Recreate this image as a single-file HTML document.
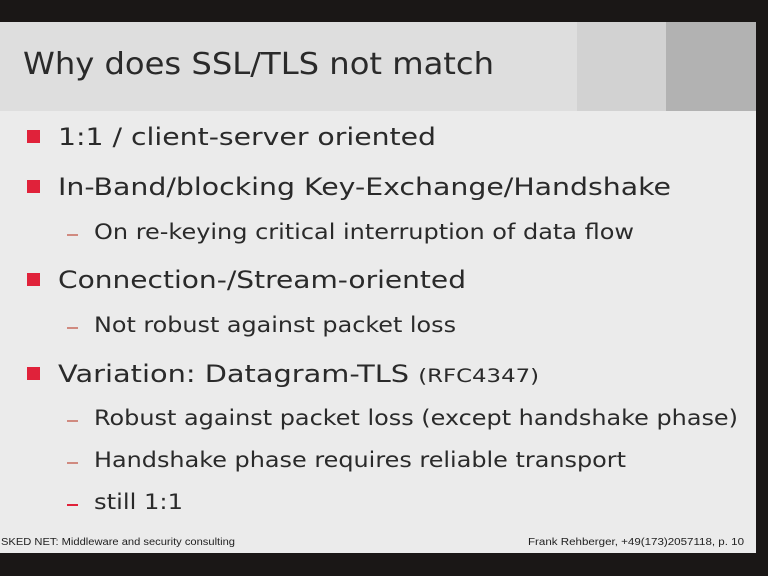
<!DOCTYPE html>
<html><head><meta charset="utf-8"><style>
html,body{margin:0;padding:0;width:768px;height:576px;background:#1a1716;overflow:hidden}
#s{position:absolute;left:0;top:22px;width:756px;height:531px;background:#ebebeb}
#hd{position:absolute;left:0;top:0;width:756px;height:89px;background:#dedede}
#b1{position:absolute;left:577px;top:0;width:89px;height:89px;background:#d2d2d2}
#b2{position:absolute;left:666px;top:0;width:90px;height:89px;background:#b2b2b2}
.t{position:absolute;white-space:nowrap;color:#2a2a2a;font-family:"DejaVu Sans","Liberation Sans",sans-serif;transform-origin:0 0;line-height:1}
.sq{position:absolute;left:27px;width:13px;height:13px;background:#e0223a}
.d{position:absolute;left:67px;width:11px;height:2px;background:#d08a80}
.f{position:absolute;font-family:"Liberation Sans",sans-serif;font-size:10px;color:#222;white-space:nowrap}
</style></head><body>
<div id="s">
<div id="hd"></div><div id="b1"></div><div id="b2"></div>
</div>
<div class="t" style="left:23px;top:50px;font-size:30px;font-family:'DejaVu Sans Condensed','DejaVu Sans',sans-serif">Why does SSL/TLS not match</div>
<div class="sq" style="top:130px"></div>
<div class="t" style="left:58px;top:125px;font-size:24px;font-family:'DejaVu Sans Condensed','DejaVu Sans',sans-serif">1:1 / client-server oriented</div>
<div class="sq" style="top:180px"></div>
<div class="t" style="left:58px;top:175px;font-size:24px">In-Band/blocking Key-Exchange/Handshake</div>
<div class="d" style="top:234px"></div>
<div class="t" style="left:94px;top:222px;font-size:21px">On re-keying critical interruption of data flow</div>
<div class="sq" style="top:273px"></div>
<div class="t" style="left:58px;top:268px;font-size:24px">Connection-/Stream-oriented</div>
<div class="d" style="top:327px"></div>
<div class="t" style="left:94px;top:315px;font-size:21px">Not robust against packet loss</div>
<div class="sq" style="top:367px"></div>
<div class="t" style="left:58px;top:362px;font-size:24px">Variation: Datagram-TLS <span style="font-size:19px">(RFC4347)</span></div>
<div class="d" style="top:420px"></div>
<div class="t" style="left:94px;top:408px;font-size:21px">Robust against packet loss (except handshake phase)</div>
<div class="d" style="top:462px"></div>
<div class="t" style="left:94px;top:450px;font-size:21px">Handshake phase requires reliable transport</div>
<div class="d" style="top:504px;background:#e0223a"></div>
<div class="t" style="left:94px;top:492px;font-size:21px">still 1:1</div>
<div class="f" style="left:1px;top:537px">SKED NET: Middleware and security consulting</div>
<div class="f" style="left:528px;top:537px">Frank Rehberger, +49(173)2057118, p. 10</div>
<script>
var W=[471,378,613,540,408,362,481,644,532,89];
var els=document.querySelectorAll('.t');
for(var i=0;i<els.length&&i<W.length;i++){var w=els[i].getBoundingClientRect().width;if(w>0)els[i].style.transform='scaleX('+(W[i]/w)+')';}
var F=document.querySelectorAll('.f');var FW=[234,216];
for(var j=0;j<F.length;j++){var w2=F[j].getBoundingClientRect().width;F[j].style.transformOrigin='0 0';F[j].style.transform='scaleX('+(FW[j]/w2)+')';}
</script>
</body></html>
